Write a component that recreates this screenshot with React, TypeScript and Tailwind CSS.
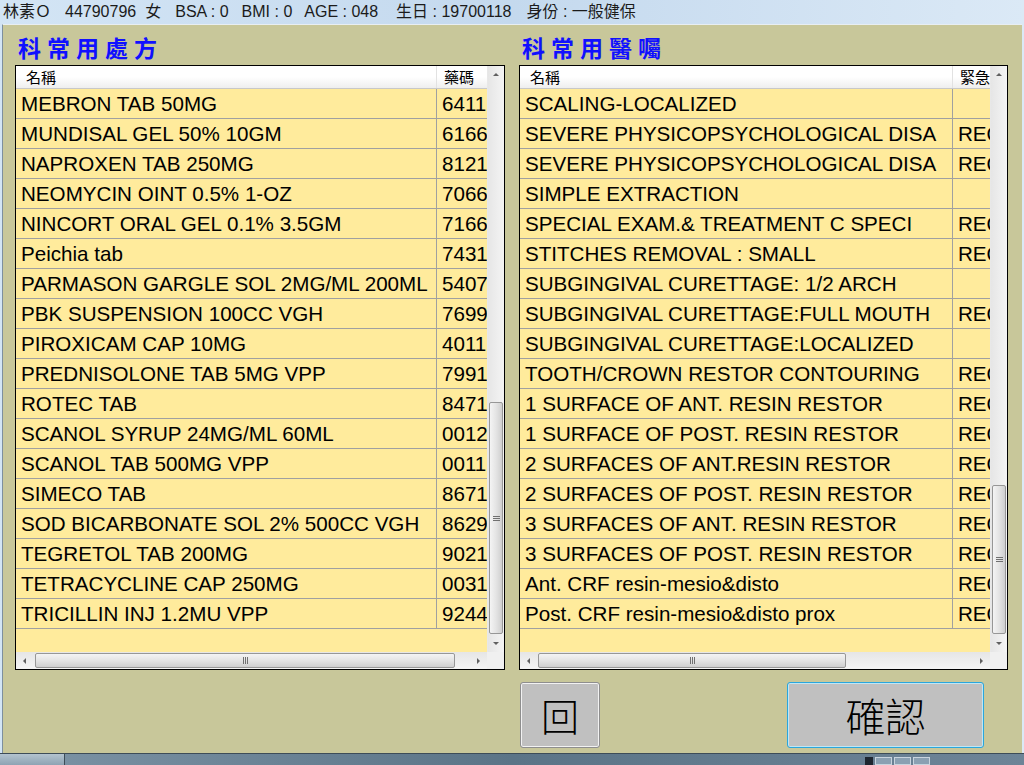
import React from 'react';

const leftRows: [string, string][] = [
  ['MEBRON TAB 50MG', '6411'],
  ['MUNDISAL GEL 50% 10GM', '6166'],
  ['NAPROXEN TAB 250MG', '8121'],
  ['NEOMYCIN OINT 0.5% 1-OZ', '7066'],
  ['NINCORT ORAL GEL 0.1% 3.5GM', '7166'],
  ['Peichia tab', '7431'],
  ['PARMASON GARGLE SOL 2MG/ML 200ML', '5407'],
  ['PBK SUSPENSION 100CC VGH', '7699'],
  ['PIROXICAM CAP 10MG', '4011'],
  ['PREDNISOLONE TAB 5MG VPP', '7991'],
  ['ROTEC TAB', '8471'],
  ['SCANOL SYRUP 24MG/ML 60ML', '0012'],
  ['SCANOL TAB 500MG VPP', '0011'],
  ['SIMECO TAB', '8671'],
  ['SOD BICARBONATE SOL 2% 500CC VGH', '8629'],
  ['TEGRETOL TAB 200MG', '9021'],
  ['TETRACYCLINE CAP 250MG', '0031'],
  ['TRICILLIN INJ 1.2MU VPP', '9244'],
];

const rightRows: [string, string][] = [
  ['SCALING-LOCALIZED', ''],
  ['SEVERE PHYSICOPSYCHOLOGICAL DISA', 'REQ'],
  ['SEVERE PHYSICOPSYCHOLOGICAL DISA', 'REQ'],
  ['SIMPLE EXTRACTION', ''],
  ['SPECIAL EXAM.& TREATMENT C SPECI', 'REQ'],
  ['STITCHES REMOVAL : SMALL', 'REQ'],
  ['SUBGINGIVAL CURETTAGE: 1/2 ARCH', ''],
  ['SUBGINGIVAL CURETTAGE:FULL MOUTH', 'REQ'],
  ['SUBGINGIVAL CURETTAGE:LOCALIZED', ''],
  ['TOOTH/CROWN RESTOR CONTOURING', 'REQ'],
  ['1 SURFACE OF ANT. RESIN RESTOR', 'REQ'],
  ['1 SURFACE OF POST. RESIN RESTOR', 'REQ'],
  ['2 SURFACES OF ANT.RESIN RESTOR', 'REQ'],
  ['2 SURFACES OF POST. RESIN RESTOR', 'REQ'],
  ['3 SURFACES OF ANT. RESIN RESTOR', 'REQ'],
  ['3 SURFACES OF POST. RESIN RESTOR', 'REQ'],
  ['Ant. CRF resin-mesio&disto', 'REQ'],
  ['Post. CRF resin-mesio&disto prox', 'REQ'],
];

const cjk = "font-['Liberation_Sans','Noto_Sans_CJK_TC',sans-serif]";

const Arrow = ({ dir }: { dir: 'up' | 'down' | 'left' | 'right' }) => {
  const pts = {
    up: '1,5 4,2 7,5',
    down: '1,2 4,5 7,2',
    left: '5,1 2,4 5,7',
    right: '2,1 5,4 2,7',
  }[dir];
  return (
    <svg width="8" height="8" viewBox="0 0 8 8">
      <polygon points={pts} fill="#606060" />
    </svg>
  );
};

const VScroll = ({ gapTop, thumb }: { gapTop: number; thumb: number }) => (
  <div className="w-[17px] h-full flex flex-col bg-gradient-to-r from-[#e6e6e6] to-[#f4f4f4] border-l border-[#e8e8e8]">
    <div className="h-[17px] flex items-center justify-center shrink-0">
      <Arrow dir="up" />
    </div>
    <div className="shrink-0" style={{ height: gapTop }} />
    <div
      className="shrink-0 mx-[1px] rounded-[2px] border border-[#979797] bg-gradient-to-r from-[#f4f4f4] via-[#e4e4e4] to-[#cfcfcf] flex flex-col items-center justify-center gap-[1px]"
      style={{ height: thumb }}
    >
      <div className="w-[7px] h-[1px] bg-[#707070]" />
      <div className="w-[7px] h-[1px] bg-[#707070]" />
      <div className="w-[7px] h-[1px] bg-[#707070]" />
    </div>
    <div className="flex-1" />
    <div className="h-[17px] flex items-center justify-center shrink-0">
      <Arrow dir="down" />
    </div>
  </div>
);

const HScroll = ({ gapLeft, thumb }: { gapLeft: number; thumb: number }) => (
  <div className="h-[17px] flex-1 flex bg-gradient-to-b from-[#e6e6e6] to-[#f4f4f4]">
    <div className="w-[17px] flex items-center justify-center shrink-0">
      <Arrow dir="left" />
    </div>
    <div className="shrink-0" style={{ width: gapLeft }} />
    <div
      className="shrink-0 my-[1px] rounded-[2px] border border-[#979797] bg-gradient-to-b from-[#f4f4f4] via-[#e4e4e4] to-[#cfcfcf] flex items-center justify-center gap-[1px]"
      style={{ width: thumb }}
    >
      <div className="h-[7px] w-[1px] bg-[#707070]" />
      <div className="h-[7px] w-[1px] bg-[#707070]" />
      <div className="h-[7px] w-[1px] bg-[#707070]" />
    </div>
    <div className="flex-1" />
    <div className="w-[17px] flex items-center justify-center shrink-0">
      <Arrow dir="right" />
    </div>
  </div>
);

const ListPanel = ({
  width,
  col1,
  head2,
  rows,
  vGap,
  vThumb,
  hGap,
  hThumb,
}: {
  width: number;
  col1: number;
  head2: string;
  rows: [string, string][];
  vGap: number;
  vThumb: number;
  hGap: number;
  hThumb: number;
}) => (
  <div className="h-[605px] border border-black bg-[#ffeb9c] flex flex-col" style={{ width }}>
    <div className="flex flex-1 min-h-0">
      <div className="flex-1 min-w-0 overflow-hidden flex flex-col">
        <div className="h-[23px] shrink-0 flex bg-gradient-to-b from-white via-white to-[#eeeeee] border-b border-[#c8c8c8] text-[15px] text-black font-['Noto_Sans_CJK_TC',sans-serif]">
          <div className="shrink-0 pl-[10px] flex items-center border-r border-[#e2e2e2]" style={{ width: col1 }}>
            名稱
          </div>
          <div className="w-[80px] shrink-0 pl-[7px] flex items-center">{head2}</div>
        </div>
        {rows.map(([name, code], i) => (
          <div
            key={i}
            className="h-[30px] shrink-0 flex border-b border-[#a0a0a0] text-[20.6px] text-black font-['Liberation_Sans',Arial,sans-serif] whitespace-nowrap"
          >
            <div className="shrink-0 pl-[5px] pt-[1px] flex items-center border-r border-[#a0a0a0] overflow-hidden" style={{ width: col1 }}>
              {name}
            </div>
            <div className="w-[80px] shrink-0 pl-[5px] pt-[1px] flex items-center">{code}</div>
          </div>
        ))}
      </div>
      <VScroll gapTop={vGap} thumb={vThumb} />
    </div>
    <div className="flex h-[17px] shrink-0">
      <HScroll gapLeft={hGap} thumb={hThumb} />
      <div className="w-[17px] bg-[#f0f0f0]" />
    </div>
  </div>
);

export default function App() {
  return (
    <div className="w-[1024px] h-[765px] overflow-hidden flex flex-col bg-gradient-to-r from-[#d3e5f5] via-[#c4d9ee] to-[#dbe9f6]">
      <div className={`h-[24px] shrink-0 flex items-center text-[16px] text-[#1b1b1b] ${cjk} whitespace-pre`}>
        <span className="ml-[3px]">林素Ｏ</span>
        <span className="ml-[14px]">44790796</span>
        <span className="ml-[9px]">女</span>
        <span className="ml-[14px]">BSA : 0</span>
        <span className="ml-[13px]">BMI : 0</span>
        <span className="ml-[12px]">AGE : 048</span>
        <span className="ml-[18px]">生日 : 19700118</span>
        <span className="ml-[15px]">身份 : 一般健保</span>
      </div>

      <div className="ml-[2px] w-[1020px] h-[729px] shrink-0 bg-[#c8c79a] border-l border-t border-[#7d8f9e] border-t-[#e8eef2] pl-[12px] flex flex-col">
        <div className="h-[40px] shrink-0 flex gap-[14px]">
          <div className="w-[490px] pl-[3px] pt-[8px] text-[23px] leading-[28px] font-bold tracking-[6px] text-[#1010ff] font-['Noto_Sans_CJK_TC',serif]">
            科常用處方
          </div>
          <div className="w-[489px] pl-[3px] pt-[8px] text-[23px] leading-[28px] font-bold tracking-[6px] text-[#1010ff] font-['Noto_Sans_CJK_TC',serif]">
            科常用醫囑
          </div>
        </div>

        <div className="flex gap-[14px]">
          <ListPanel width={490} col1={421} head2="藥碼" rows={leftRows} vGap={319} vThumb={232} hGap={2} hThumb={420} />
          <ListPanel width={489} col1={433} head2="緊急" rows={rightRows} vGap={402} vThumb={149} hGap={1} hThumb={308} />
        </div>

        <div className="flex mt-[12px]">
          <div className="w-[505px] shrink-0" />
          <button className="w-[80px] h-[66px] bg-[#c0c0c0] border border-[#8e8e8e] rounded-[3px] shadow-[inset_0_0_0_1px_#f2f2f2] text-[38px] leading-none text-black font-['Noto_Sans_CJK_TC',serif] font-light flex items-center justify-center">
            回
          </button>
          <div className="w-[187px] shrink-0" />
          <button className="w-[197px] h-[66px] bg-[#c0c0c0] border border-[#2aa6dc] rounded-[3px] shadow-[inset_0_0_0_1px_#bfe6f5] text-[40px] leading-none text-black font-['Noto_Sans_CJK_TC',serif] font-light flex items-center justify-center">
            確認
          </button>
        </div>
      </div>

      <div className="flex-1 flex bg-gradient-to-r from-[#7d94a6] via-[#5b7487] to-[#6d8497] border-t border-[#3d4c58]">
        <div className="w-[65px] bg-gradient-to-b from-[#b3c3cf] to-[#8ea3b3] border-r border-[#3d4c58]" />
        <div className="flex-1" />
        <div className="flex gap-[2px] mr-[94px] pt-[3px]">
          <div className="w-[8px] h-[8px] bg-[#1d2630]" />
          <div className="w-[17px] h-[8px] bg-[#8aa0b2] border border-[#c8d4de]" />
          <div className="w-[17px] h-[8px] bg-[#8aa0b2] border border-[#c8d4de]" />
          <div className="w-[17px] h-[8px] bg-[#8aa0b2] border border-[#c8d4de]" />
        </div>
      </div>
    </div>
  );
}
